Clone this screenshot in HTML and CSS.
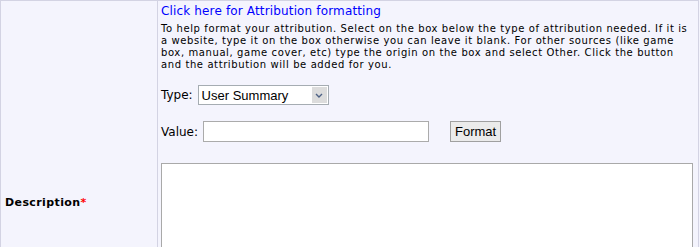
FILE: index.html
```html
<!DOCTYPE html>
<html lang="en">
<head>
    <meta charset="UTF-8">
    <title>Add Attribution</title>
    <link rel="stylesheet" href="styles.css">
</head>
<body>
    <div class="form-table">
        <div class="row">
            <div class="label"></div>
            <div class="field">
                <a href="#" class="attr-link">Click here for Attribution formatting</a>
                <p class="help">To help format your attribution. Select on the box below the type of attribution needed. If it is a website, type it on the box otherwise you can leave it blank. For other sources (like game box, manual, game cover, etc) type the origin on the box and select Other. Click the button and the attribution will be added for you.</p>
                <div class="line">
                    <label for="attrType">Type:</label>
                    <span class="select-wrap">
                        <select id="attrType">
                            <option>User Summary</option>
                            <option>Website</option>
                            <option>Other</option>
                        </select>
                        <span class="arrow">
                            <svg width="8" height="5" viewBox="0 0 8 5"><path d="M1 1l3 3 3-3" fill="none" stroke="#4d6185" stroke-width="1.4"/></svg>
                        </span>
                    </span>
                </div>
                <div class="line">
                    <label for="attrValue">Value:</label>
                    <input type="text" id="attrValue">
                    <button type="button">Format</button>
                </div>
            </div>
        </div>
        <div class="row">
            <div class="label desc">Description<span class="req">*</span></div>
            <div class="field">
                <textarea></textarea>
            </div>
        </div>
    </div>
</body>
</html>
```

FILE: styles.css
```css
body {
    margin: 0;
    background-color: #f4f4fd;
    font-family: "DejaVu Sans", Verdana, sans-serif;
    color: #000;
}
.form-table {
    width: 697px;
    border: 1px solid #d3d3e3;
    border-bottom: none;
    background-color: #f4f4fd;
}
.row {
    display: flex;
}
.label {
    width: 156px;
    flex-shrink: 0;
    border-right: 1px solid #d3d3e3;
}
.field {
    flex: 1;
    padding: 3px 5px 0 3px;
}
.attr-link {
    display: block;
    color: #0000ff;
    text-decoration: none;
    font-size: 12px;
    letter-spacing: 0.15px;
    line-height: 15px;
}
.help {
    margin: 4px 2px 0 0;
    font-size: 10px;
    letter-spacing: 0.6px;
    line-height: 12px;
}
.line {
    display: flex;
    align-items: center;
    margin-top: 14px;
    font-size: 12px;
}
.line + .line {
    margin-top: 16px;
}
.line label {
    margin-right: 5px;
}
.select-wrap {
    position: relative;
    display: inline-block;
}
select {
    appearance: none;
    width: 131px;
    height: 20px;
    border: 1px solid #a5acb2;
    background: #fff;
    font-family: "Liberation Sans", Arial, sans-serif;
    font-size: 13px;
    padding: 0 0 0 3px;
    margin: 0;
}
.arrow {
    position: absolute;
    right: 2px;
    top: 2px;
    width: 15px;
    height: 16px;
    background: #dcdcdc;
    display: flex;
    align-items: center;
    justify-content: center;
}
input {
    width: 222px;
    height: 17px;
    border: 1px solid #ababab;
    margin: 0;
    padding: 1px;
}
button {
    margin-left: 21px;
    height: 21px;
    padding: 0 4px;
    border: 1px solid #a0a0a0;
    background: #ebebeb;
    font-family: "Liberation Sans", Arial, sans-serif;
    font-size: 13px;
}
.desc {
    display: flex;
    align-items: center;
    padding-left: 4px;
    width: 152px;
    font-weight: bold;
    font-size: 11px;
    letter-spacing: 0.4px;
}
.req {
    color: #ff0000;
}
textarea {
    display: block;
    margin-top: 18px;
    width: 532px;
    height: 100px;
    border: 1px solid #a9a9a9;
    box-sizing: border-box;
    resize: none;
}
```
